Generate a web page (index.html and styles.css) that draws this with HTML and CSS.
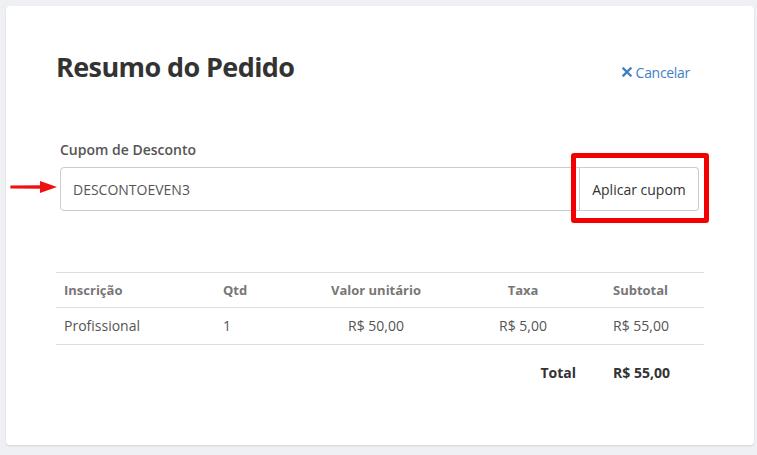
FILE: index.html
```html
<!DOCTYPE html>
<html lang="pt-BR">
<head>
<meta charset="utf-8">
<title>Resumo do Pedido</title>
<link rel="stylesheet" href="styles.css">
</head>
<body>
<div class="card">
  <div class="header">
    <h1 class="title">Resumo do Pedido</h1>
    <a class="cancel" href="#"><svg class="cancel-icon" viewBox="0 0 10 10" width="10" height="10"><path d="M1.5 1.5 L8.5 8.5 M8.5 1.5 L1.5 8.5" stroke="#3f7fc4" stroke-width="2.4" stroke-linecap="square"/></svg>Cancelar</a>
  </div>
  <div class="coupon">
    <label class="coupon-label">Cupom de Desconto</label>
    <div class="input-group">
      <svg class="arrow" viewBox="0 0 48 14" width="48" height="14"><path d="M0.5 5.4 L32 5.2 L32 8.8 L0.5 8.6 Q0 7 0.5 5.4 Z" fill="#f01010"/><path d="M30 1 L47 7 L30 13 Z" fill="#f01010"/></svg>
      <div class="input">DESCONTOEVEN3</div>
      <div class="btn-wrap">
        <button class="btn">Aplicar cupom</button>
        <span class="highlight"></span>
      </div>
    </div>
  </div>
  <div class="table">
    <div class="row head">
      <div class="c1">Inscrição</div>
      <div class="c2">Qtd</div>
      <div class="c3">Valor unitário</div>
      <div class="c4">Taxa</div>
      <div class="c5">Subtotal</div>
    </div>
    <div class="row body">
      <div class="c1">Profissional</div>
      <div class="c2">1</div>
      <div class="c3">R$ 50,00</div>
      <div class="c4">R$ 5,00</div>
      <div class="c5">R$ 55,00</div>
    </div>
    <div class="row total">
      <div class="c1"></div>
      <div class="c2"></div>
      <div class="c3"></div>
      <div class="c4 total-label">Total</div>
      <div class="c5">R$ 55,00</div>
    </div>
  </div>
</div>
</body>
</html>
```

FILE: styles.css
```css
* { box-sizing: border-box; }
html, body { margin: 0; }
body {
  background: #eef0f4;
  padding: 6px 3px;
  font-family: "Open Sans", "Liberation Sans", sans-serif;
  color: #555;
}
.card {
  background: #fff;
  border-radius: 4px;
  box-shadow: 0 1px 2px rgba(0,0,0,0.12);
  padding: 44px 50px 44px 50px;
  width: 748px;
  margin-left: 3px;
}
.header {
  display: flex;
  justify-content: space-between;
  align-items: baseline;
  padding-right: 14px;
}
.title {
  margin: 0;
  font-size: 27px;
  line-height: 34px;
  font-weight: 700;
  color: #333;
  letter-spacing: -0.6px;
}
.cancel {
  color: #3f7fc4;
  text-decoration: none;
  font-size: 14px;
  display: flex;
  align-items: center;
  gap: 4px;
  letter-spacing: -0.3px;
}
.cancel-icon { display: block; }
.coupon {
  margin: 56px 5px 0 4px;
}
.coupon-label {
  display: block;
  font-size: 14px;
  line-height: 20px;
  font-weight: 600;
  color: #555;
  margin-bottom: 7px;
}
.input-group {
  display: flex;
  position: relative;
  height: 44px;
}
.arrow {
  position: absolute;
  left: -50px;
  top: 13px;
}
.input {
  flex: 1;
  border: 1px solid #ccc;
  border-radius: 4px 0 0 4px;
  padding: 0 12px;
  display: flex;
  align-items: center;
  font-size: 14px;
  color: #555;
}
.btn-wrap {
  position: relative;
  display: flex;
}
.btn {
  font-family: inherit;
  font-size: 14px;
  color: #333;
  background: #fff;
  border: 1px solid #ccc;
  border-left: none;
  border-radius: 0 4px 4px 0;
  padding: 0 12px;
  width: 119px;
}
.highlight {
  position: absolute;
  left: -9px;
  top: -14px;
  right: -10px;
  bottom: -12px;
  border: 5px solid #f50000;
  border-radius: 3px;
  pointer-events: none;
}
.table {
  margin-top: 61px;
  border-top: 1px solid #ddd;
  font-size: 14px;
}
.row {
  display: grid;
  grid-template-columns: 159px 85px 152px 142px 110px;
  align-items: center;
}
.row > div { padding: 0 8px; line-height: 20px; }
.head {
  height: 35px;
  border-bottom: 1px solid #ddd;
  font-weight: 700;
  font-size: 13px;
  color: #777;
}
.body {
  height: 37px;
  border-bottom: 1px solid #ddd;
}
.total {
  padding: 18px 0;
  font-weight: 700;
  color: #333;
}
.c3, .c4 { text-align: center; }
.c5 { padding-left: 19px !important; }
.total-label { text-align: right; padding-right: 18px !important; }
```
